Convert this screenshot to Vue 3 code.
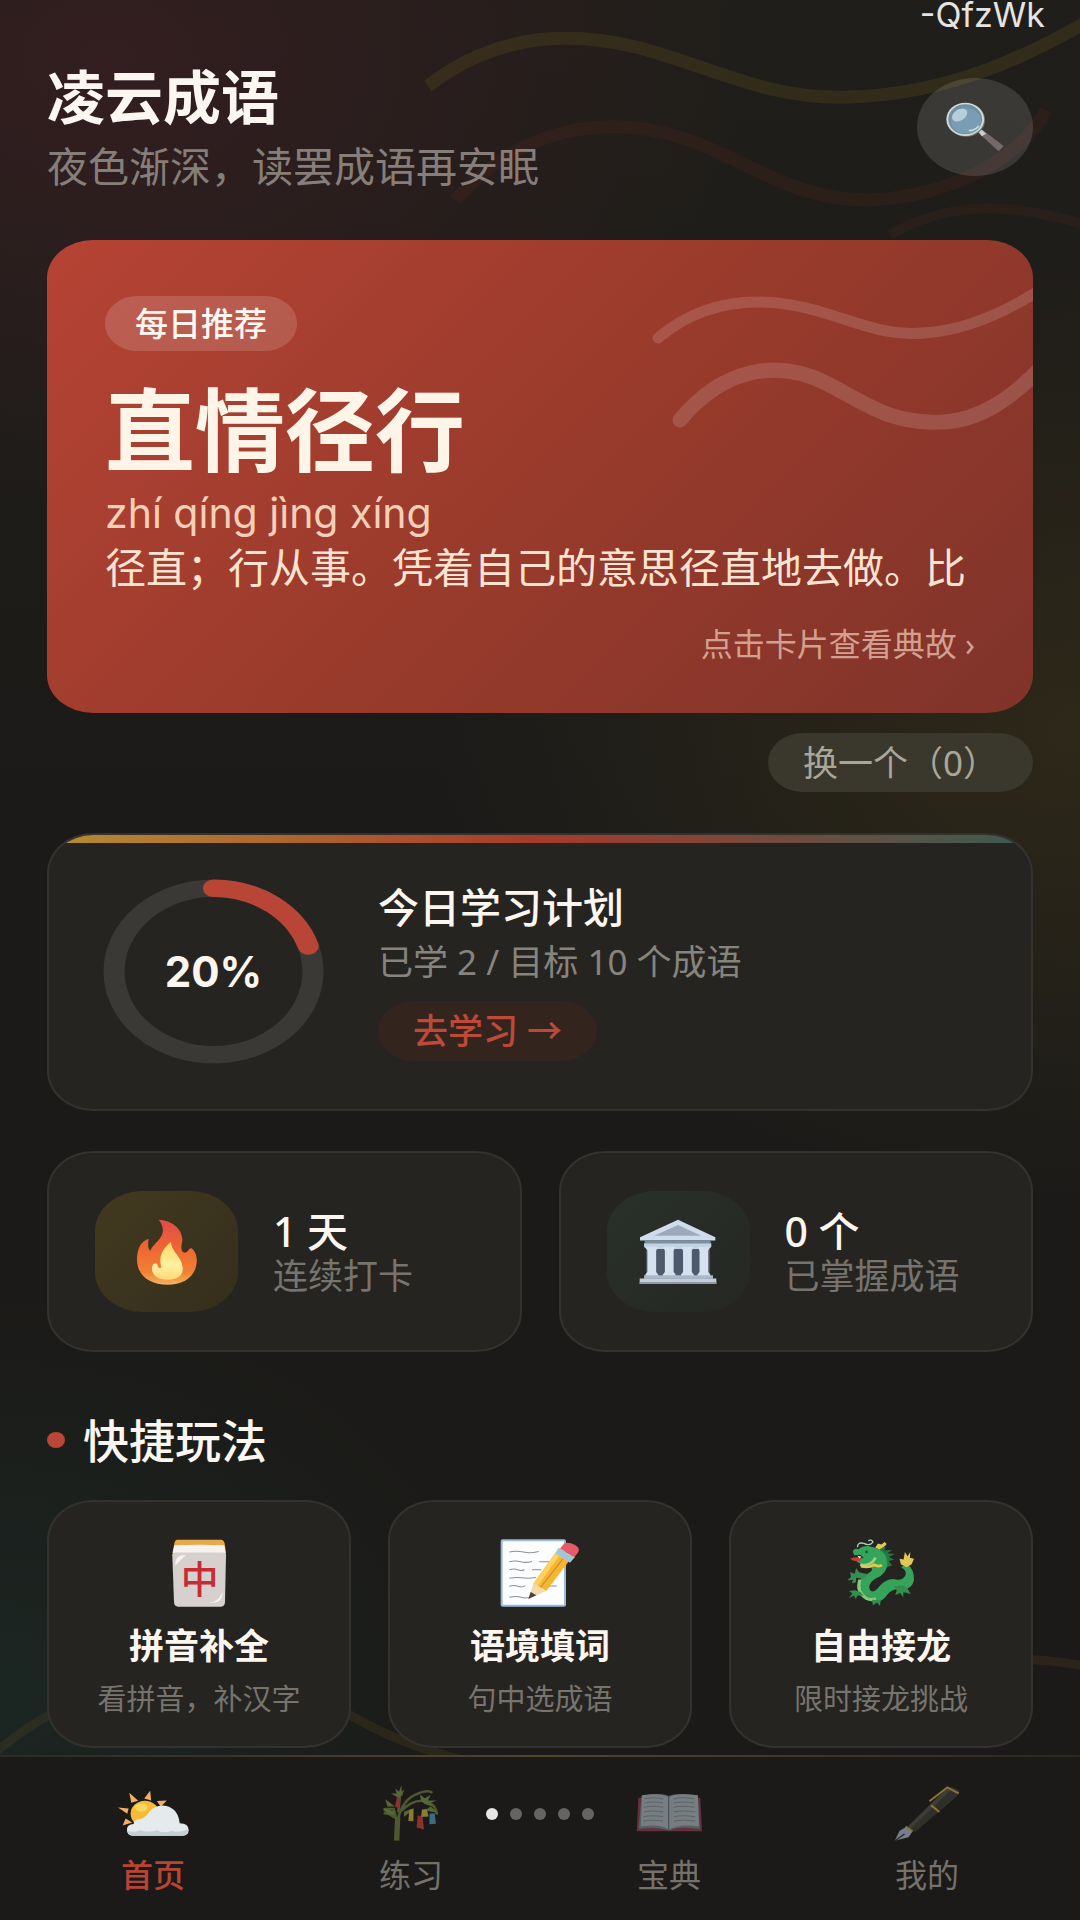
<script setup>
const games = [
  { icon: 'tile', name: '拼音补全', note: '看拼音，补汉字' },
  { icon: 'memo', name: '语境填词', note: '句中选成语' },
  { icon: 'dragon', name: '自由接龙', note: '限时接龙挑战' },
]
const tabs = [
  { icon: 'weather', name: '首页', active: true },
  { icon: 'bamboo', name: '练习' },
  { icon: 'book', name: '宝典' },
  { icon: 'pen', name: '我的' },
]
const progress = 20
</script>

<template>
  <div class="page">
    <svg class="waves waves-top" viewBox="0 0 1080 300" preserveAspectRatio="none" aria-hidden="true">
      <path d="M428 86C490 38 560 28 640 48C720 70 770 100 850 97C950 94 1030 55 1090 20" stroke="#6d5a1e" stroke-opacity=".24" stroke-width="13" />
      <path d="M455 200C510 140 580 115 660 132C740 150 780 200 870 200C950 196 1020 160 1046 110" stroke="#7a2e22" stroke-opacity=".15" stroke-width="13" />
      <path d="M890 235C950 200 1010 202 1090 226" stroke="#7a2e22" stroke-opacity=".12" stroke-width="10" />
    </svg>
    <svg class="waves waves-bottom" viewBox="0 0 1080 200" preserveAspectRatio="none" aria-hidden="true">
      <path d="M-10 197C100 100 250 90 350 155C390 178 420 190 480 204M880 150C930 100 1000 90 1090 107" stroke="#6d5a1e" stroke-opacity=".18" stroke-width="9" />
    </svg>

    <div class="status">-QfzWk</div>

    <main class="content">
      <header class="header">
        <div>
          <h1>凌云成语</h1>
          <p class="greeting">夜色渐深，读罢成语再安眠</p>
        </div>
        <button class="search" type="button" aria-label="搜索">
          <svg width="58" height="50" viewBox="135 100 175 150" preserveAspectRatio="none">
            <path d="M230 190L246 184L309 232L294 248Z" fill="#746a6b" />
            <path d="M232 188L243 183L256 195L243 203Z" fill="#c9ced0" />
            <ellipse cx="196" cy="154" rx="57" ry="50" fill="#77716d" />
            <ellipse cx="193" cy="152" rx="57" ry="50" fill="#d4d8d8" />
            <ellipse cx="193" cy="152" rx="51" ry="45" fill="#6e8fa4" />
            <ellipse cx="196" cy="157" rx="45" ry="38" fill="#7b9db3" />
            <ellipse cx="176" cy="139" rx="25" ry="17" transform="rotate(-32 176 139)" fill="#b4cfdb" />
            <path d="M204 186Q222 186 234 172" stroke="#c5dce4" stroke-width="5" fill="none" />
          </svg>
        </button>
      </header>

      <article class="daily">
        <svg class="daily-waves" viewBox="0 0 400 160" preserveAspectRatio="none" aria-hidden="true">
          <path d="M25 52C70 14 125 8 185 25C235 40 255 50 290 47C330 45 370 28 410 2" stroke-width="11" />
          <path d="M47 134C90 82 145 72 195 98C240 122 260 138 310 136C350 134 380 110 410 80" stroke-width="15" />
        </svg>
        <span class="tag">每日推荐</span>
        <h2>直情径行</h2>
        <p class="pinyin">zhí qíng jìng xíng</p>
        <p class="meaning">径直；行从事。凭着自己的意思径直地去做。比</p>
        <p class="hint">点击卡片查看典故 ›</p>
      </article>

      <button class="swap" type="button">换一个（0）</button>

      <section class="plan">
        <div class="ring">
          <svg viewBox="0 0 220 220" preserveAspectRatio="none" aria-hidden="true">
            <circle cx="110" cy="110" r="99" fill="none" stroke="#3a3935" stroke-width="21" />
            <circle cx="110" cy="110" r="99" fill="none" stroke="#b94536" stroke-width="21" stroke-linecap="round"
              pathLength="100" :stroke-dasharray="`${progress} 100`" transform="rotate(-90 110 110)" />
          </svg>
          <strong>{{ progress }}%</strong>
        </div>
        <div>
          <h3>今日学习计划</h3>
          <p class="plan-note">已学 2 / 目标 10 个成语</p>
          <button class="learn" type="button">去学习 →</button>
        </div>
      </section>

      <section class="stats">
        <div class="stat">
          <span class="badge gold">
            <svg width="62" height="66" viewBox="135 120 187 200" preserveAspectRatio="none" aria-hidden="true">
              <defs>
                <linearGradient id="flame" x1="0" y1="0" x2="0" y2="1">
                  <stop offset="0" stop-color="#df4b4b" /><stop offset=".4" stop-color="#ee6433" /><stop offset=".8" stop-color="#f28034" /><stop offset="1" stop-color="#f4b25c" />
                </linearGradient>
                <linearGradient id="core" x1="0" y1="0" x2="0" y2="1">
                  <stop offset="0" stop-color="#fdd663" /><stop offset=".6" stop-color="#fff0a0" /><stop offset="1" stop-color="#ffd87a" />
                </linearGradient>
              </defs>
              <path fill="url(#flame)" d="M203 122C244 124 276 150 275 186C270 205 270 222 283 222C294 221 293 208 302 209C315 218 320 236 318 252C314 295 280 319 230 319C175 319 138 290 138 243C138 210 150 188 173 180C170 200 172 212 178 216C190 190 218 180 216 152C215 138 210 130 203 122Z" />
              <path fill="url(#core)" d="M240 190C243 222 275 235 276 270C276 293 260 303 230 304C200 304 183 290 183 270C183 258 190 252 199 256C200 266 205 271 212 267C203 240 210 215 240 190Z" />
            </svg>
          </span>
          <div><p class="count">1 天</p><p class="label">连续打卡</p></div>
        </div>
        <div class="stat">
          <span class="badge jade">
            <svg width="78" height="66" viewBox="115 120 232 202" preserveAspectRatio="none" aria-hidden="true">
              <path fill="#4c5a6b" d="M136 205H326V296H136Z" />
              <path fill="#cfdceb" d="M231 122L342 176V186H118V176Z" />
              <path fill="#9caabc" d="M231 138L300 171H160Z" />
              <path fill="#7f8fa3" d="M132 186H328V194H132Z" />
              <path fill="#c4d3e4" d="M130 194H330V206L322 212H138L130 206Z" />
              <path v-for="x in [135, 187, 241, 290]" :key="x" fill="#d5e1ee" :d="`M${x} 206h36l-5 11v65l6 8v6h-38v-6l6-8v-65z`" />
              <path fill="#a9b8ca" d="M130 292H335V303H130Z" />
              <path fill="#c3ceda" d="M117 302H345V318H117Z" />
              <path fill="#8b9bae" d="M117 313H345V319H117Z" />
            </svg>
          </span>
          <div><p class="count">0 个</p><p class="label">已掌握成语</p></div>
        </div>
      </section>

      <h2 class="section-title">快捷玩法</h2>
      <section class="games">
        <button v-for="game in games" :key="game.name" class="game" type="button">
          <svg v-if="game.icon === 'tile'" width="54" height="68" viewBox="68 58 160 203" preserveAspectRatio="none" aria-hidden="true">
            <path fill="#e9a849" d="M84 60H214Q224 61 225 78L228 100H69L74 76Q76 60 84 60Z" />
            <path fill="#f5f2ef" d="M75 77Q150 73 223 77L228 108H69Z" />
            <path fill="#d6d1ce" d="M69 108Q69 98 80 98H217Q228 98 228 108L225 247Q224 260 213 260H86Q75 260 74 247Z" />
            <path fill="#f6f4f2" d="M78 137Q76 104 109 106Q96 119 78 137ZM176 249Q207 246 217 217Q220 251 176 249Z" />
            <text x="150" y="219" text-anchor="middle" font-size="112" font-weight="500" fill="#c92b34">中</text>
          </svg>
          <svg v-else-if="game.icon === 'memo'" width="80" height="68" viewBox="1048 58 240 203" preserveAspectRatio="none" aria-hidden="true">
            <rect x="1053" y="62" width="190" height="195" rx="3" fill="#fbfdff" stroke="#9bb9d9" stroke-width="6" />
            <g fill="none" stroke="#8d9298" stroke-width="3">
              <path d="M1076 97q22-5 42 0t46-2M1076 126q18-4 34 0t34-1M1166 126h34M1076 150q14-5 25 0t20-1M1144 150h28M1076 175q20-4 38-1t42-1M1076 199q14-5 26 0t22-2M1190 198h28M1076 232q20-5 36 0t30-2" />
            </g>
            <path fill="#f3b532" d="M1148 191L1213 101L1255 124L1187 213Z" />
            <path fill="#ffd161" d="M1148 191L1213 101L1226 108L1160 200Z" />
            <path stroke="#cf872a" stroke-width="3" d="M1170 202L1238 116" />
            <path fill="#f2dcae" d="M1148 191L1187 213L1133 237Z" />
            <path fill="#48443f" d="M1140 216L1157 226L1133 237Z" />
            <path fill="#a5c6cf" d="M1213 101L1224 84L1273 112L1258 129Z" />
            <path fill="#e65a68" d="M1228 86L1240 72Q1252 65 1273 76Q1290 86 1282 98L1272 112Z" />
          </svg>
          <svg v-else width="68" height="68" viewBox="80 60 202 200" preserveAspectRatio="none" aria-hidden="true">
            <g fill="#247a43">
              <path d="M168 92L196 82L190 94L214 92L200 102L221 104L204 113L220 121L203 125L214 137L190 146Z" />
            </g>
            <path fill="#36a35b" d="M97 98Q100 85 115 90Q124 80 146 81Q186 87 197 115Q207 148 180 169Q145 184 146 204Q153 224 170 206Q192 178 218 178Q246 185 254 166Q258 152 241 143L257 132Q281 150 279 181Q274 208 242 209Q214 204 199 225Q181 251 154 244Q115 236 110 202Q111 179 140 163Q164 150 149 137Q128 139 108 127L129 114L119 106L102 108Z" />
            <path fill="none" stroke="#8bc879" stroke-width="9" d="M118 180Q107 215 138 235Q148 240 166 236" />
            <path fill="none" stroke="#98d384" stroke-width="8" d="M119 135Q150 143 165 115" />
            <path fill="none" stroke="#e8c64a" stroke-width="8" d="M121 140Q146 145 160 136Q174 143 184 137" />
            <path fill="#c43e34" d="M89 118Q104 112 126 115L119 125Q101 128 89 118Z" />
            <path fill="#fff" d="M111 109L123 112L117 117Z" />
            <path fill="none" stroke="#a8d3b4" stroke-width="4" d="M111 84Q111 68 130 73Q147 82 157 69Q153 60 143 65" />
            <path fill="#e3c653" d="M164 85L172 73L182 76L192 69L198 75L190 83L176 91ZM240 134L236 118L248 120L252 98L260 111L268 98L267 115L279 118L272 134L257 143Z" />
            <path fill="#348e50" d="M130 178L107 174L107 187L94 190L98 180L81 182L92 172L89 157L103 162L107 145L116 158L142 164ZM119 215L103 211L86 213L96 220L86 234L101 226L106 237L111 226L130 227ZM154 239L157 255L169 247L178 257L180 240ZM218 199L228 211L223 225L238 219L247 231L248 216L269 222L259 204L245 196Z" />
            <circle cx="138" cy="98" r="4" fill="#17532c" />
          </svg>
          <span class="game-name">{{ game.name }}</span>
          <span class="game-note">{{ game.note }}</span>
        </button>
      </section>
    </main>

    <nav class="tabs">
      <a v-for="tab in tabs" :key="tab.name" href="#" :class="{ active: tab.active }">
        <span class="tab-icon">
          <svg v-if="tab.icon === 'weather'" width="72" height="46" viewBox="48 66 217 137" preserveAspectRatio="none" aria-hidden="true">
            <path fill="#f0ae67" d="M85 74L112 98L91 104ZM148 68L151 97L130 91ZM198 97L180 116L168 99ZM51 118L83 121L79 137ZM65 172L74 151L94 163Z" />
            <ellipse cx="132" cy="137" rx="43" ry="39" fill="#f5bc35" />
            <ellipse cx="121" cy="118" rx="19" ry="12" fill="#ffd65d" />
            <path fill="#e5ebed" d="M94 202Q77 200 78 182Q79 168 98 167Q98 154 118 152Q136 148 146 130Q160 112 186 112Q232 116 237 165Q264 165 264 186Q263 202 246 202Z" />
            <path fill="#c4cfd4" d="M80 188Q103 194 119 185Q141 194 169 186Q187 197 213 187Q235 195 263 184Q263 202 246 202H94Q82 200 80 188Z" />
          </svg>
          <svg v-else-if="tab.icon === 'bamboo'" width="56" height="56" viewBox="848 52 168 170" preserveAspectRatio="none" aria-hidden="true">
            <g fill="none" stroke="#4d5830" stroke-width="8">
              <path stroke-width="16" d="M889 221L892 150" />
              <path d="M892 160Q905 100 944 82T996 76M903 130Q940 94 973 101T1010 142M888 153L866 140L850 137M887 151L880 125L855 125M894 135L899 80" />
            </g>
            <path fill="#57653a" d="M894 91L872 78L889 78L884 63L896 72L903 52L904 72L912 65L906 83ZM962 99L959 80L973 92L991 82L983 99L1010 99L989 107L998 118L973 110ZM864 139L849 129L850 121L883 133L881 144ZM911 149L911 133L942 121L925 138ZM974 129L991 117L1012 136L994 133ZM861 117L855 95L884 117Z" />
            <path fill="#8c3030" d="M890 88L900 97L895 124L884 117ZM952 144L967 150L971 187L949 181Z" />
            <path fill="#877b35" d="M927 127L940 125L939 162L924 161ZM965 126L979 125L985 148L962 149Z" />
            <path fill="#3c6c80" d="M988 139L1003 138L1007 170L987 171Z" />
          </svg>
          <svg v-else-if="tab.icon === 'book'" width="66" height="40" viewBox="510 80 192 120" preserveAspectRatio="none" aria-hidden="true">
            <path fill="#63323a" d="M517 94H697L702 195H512Z" />
            <path fill="#566166" d="M518 187L526 88Q585 77 605 89Q628 77 690 88L696 188Q633 179 612 191H600Q570 181 518 187Z" />
            <path fill="#777e81" d="M524 180L528 87Q584 79 605 93Q629 79 690 87L693 180Q633 172 606 190Q579 172 524 180Z" />
            <path stroke="#5c6468" stroke-width="3" fill="none" d="M535 98q27-7 54 0M535 110q27-6 54 0M533 123q27-6 56 0M533 137q27-6 56 0M532 151q27-6 57 0M531 165q27-6 58 0M619 98q27-7 60 0M619 110q27-6 61 0M619 123q27-6 61 0M620 137q27-6 62 0M620 151q27-6 62 0M620 165q27-6 63 0" />
            <path d="M605 89V194" stroke="#4c575d" stroke-width="4" />
          </svg>
          <svg v-else width="66" height="56" viewBox="1262 55 188 168" preserveAspectRatio="none" aria-hidden="true">
            <path fill="#30302b" d="M1301 180L1413 64Q1426 56 1447 72Q1451 80 1440 90L1321 197Z" />
            <path fill="#3c3d37" d="M1301 180L1413 64L1424 70L1310 186Z" />
            <path fill="none" stroke="#897337" stroke-width="6" d="M1363 104L1414 62L1446 80M1368 116L1391 136M1295 180L1315 194" />
            <path fill="#777e87" d="M1295 182L1314 196L1303 212L1264 222L1278 192Z" />
            <path d="M1265 222L1292 202" stroke="#272b30" stroke-width="4" />
          </svg>
        </span>
        <span>{{ tab.name }}</span>
      </a>
      <div class="dots" aria-hidden="true"><i v-for="n in 5" :key="n" :class="{ on: n === 1 }"></i></div>
    </nav>
  </div>
</template>

<style>
body { margin: 0; background: #1b1a18; }
</style>

<style scoped>
.page {
  position: relative;
  display: flex;
  flex-direction: column;
  min-height: 100vh;
  overflow: hidden;
  box-sizing: border-box;
  color: #fbf6ef;
  font-family: "Noto Sans", "Noto Sans CJK SC", sans-serif;
  background:
    radial-gradient(ellipse 640px 460px at 10% 3%, #331e20 0%, #331e2000 100%),
    radial-gradient(ellipse 640px 480px at 100% 38%, #2d2818 0%, #2d281800 100%),
    radial-gradient(ellipse 500px 400px at 0% 88%, #1b2622 0%, #1b262200 100%),
    linear-gradient(#201e1a, #1b1a18 45%, #1b1a18);
}
h1, h2, h3, p { margin: 0; }
button { border: 0; padding: 0; font-family: inherit; color: inherit; cursor: pointer; }
svg { display: block; }
.waves { position: absolute; left: 0; width: 100%; fill: none; }
.waves-top { top: 0; height: 300px; }
.waves-bottom { bottom: 160px; height: 200px; }
.status {
  position: relative;
  padding-right: 35px;
  text-align: right;
  font-family: Inter, sans-serif;
  font-size: 34px;
  line-height: 30px;
  color: #e6e4e1;
}
.content { position: relative; padding: 34px 47px 7px; }
.header { display: flex; align-items: center; justify-content: space-between; }
h1 { font-size: 58px; line-height: 66px; font-weight: 700; }
.greeting { margin-top: 12px; font-size: 41px; line-height: 48px; color: #867e78; }
.search {
  display: flex;
  align-items: center;
  justify-content: center;
  width: 116px;
  height: 98px;
  border-radius: 50%;
  background: #ffffff1f;
}
.daily {
  position: relative;
  overflow: hidden;
  margin-top: 50px;
  padding: 56px 58px 49px;
  border-radius: 46px / 38px;
  background: linear-gradient(135deg, #b64334 0%, #9a3b2c 48%, #80332a 100%);
}
.daily-waves {
  position: absolute;
  top: 46px;
  right: 0;
  width: 400px;
  height: 160px;
  fill: none;
  stroke: #ffffff24;
  stroke-linecap: round;
}
.tag {
  display: inline-block;
  padding: 0 30px;
  border-radius: 32px / 27px;
  font-size: 33px;
  line-height: 55px;
  font-weight: 500;
  background: #ffffff26;
  vertical-align: top;
}
.daily h2 { margin-top: 28px; font-size: 90px; line-height: 100px; font-weight: 700; color: #fff4e8; }
.pinyin { margin-top: 10px; font-family: Inter, sans-serif; font-size: 41px; line-height: 48px; color: #f3cfb9; }
.meaning { margin-top: 6px; font-size: 41px; line-height: 48px; color: #fbe3d2; white-space: nowrap; }
.hint { margin-top: 33px; font-size: 32px; line-height: 40px; text-align: right; color: #d3a08f; }
.swap {
  display: block;
  margin: 20px 0 0 auto;
  padding: 0 35px;
  border-radius: 35px / 29px;
  font-size: 35px;
  line-height: 59px;
  color: #a9a69a;
  background: #3a372c;
}
.plan, .stat, .game {
  box-sizing: border-box;
  border: 2px solid #33322e;
  border-radius: 46px / 40px;
  background: #262420;
}
.plan {
  position: relative;
  overflow: hidden;
  display: flex;
  align-items: center;
  gap: 54px;
  margin-top: 41px;
  padding: 44px 54px 45px;
}
.plan::before {
  content: "";
  position: absolute;
  inset: 0 0 auto;
  height: 8px;
  background: linear-gradient(90deg, #b58d32, #a83a2b 50%, #3a5c50);
}
.ring { display: grid; place-items: center; }
.ring > * { grid-area: 1 / 1; }
.ring svg { width: 221px; height: 185px; }
.ring strong { font-family: Inter, sans-serif; font-size: 42px; line-height: 48px; font-weight: 700; }
h3 { font-size: 41px; line-height: 50px; font-weight: 500; }
.plan-note { margin-top: 9px; font-size: 35px; line-height: 42px; color: #87847e; }
.learn {
  margin-top: 18px;
  padding: 0 35px;
  border-radius: 36px / 30px;
  font-size: 35px;
  line-height: 60px;
  font-weight: 500;
  color: #bd4939;
  background: #34241e;
}
.stats { display: grid; grid-template-columns: 1fr 1fr; gap: 37px; margin-top: 40px; }
.stat { display: flex; align-items: center; gap: 35px; padding: 38px 46px; }
.badge {
  flex: none;
  display: flex;
  align-items: center;
  justify-content: center;
  width: 143px;
  height: 121px;
  border-radius: 48px / 40px;
}
.gold { background: linear-gradient(135deg, #42391f, #342e1c); }
.jade { background: linear-gradient(135deg, #29302a, #262822); }
.count { font-size: 41px; line-height: 46px; font-weight: 500; }
.label { margin-top: 2px; font-size: 35px; line-height: 40px; color: #77746e; white-space: nowrap; }
.section-title {
  display: flex;
  align-items: center;
  gap: 18px;
  margin-top: 60px;
  font-size: 46px;
  line-height: 56px;
  font-weight: 500;
}
.section-title::before { content: ""; width: 18px; height: 16px; border-radius: 50%; background: #b94738; }
.games { display: grid; grid-template-columns: repeat(3, 1fr); gap: 37px; margin-top: 32px; }
.game { display: flex; flex-direction: column; align-items: center; padding: 37px 0 29px; }
.game-name { margin-top: 17px; font-size: 35px; line-height: 44px; font-weight: 700; }
.game-note { margin-top: 13px; font-size: 29px; line-height: 36px; color: #77746e; }
.tabs {
  position: relative;
  display: grid;
  grid-template-columns: repeat(4, 1fr);
  margin-top: auto;
  padding: 26px 24px 25px;
  border-top: 2px solid;
  border-image: linear-gradient(90deg, #2c2b25, #54452a 50%, #2c2820) 1;
  background: #1b1a18;
}
.tabs a {
  display: flex;
  flex-direction: column;
  align-items: center;
  gap: 12px;
  font-size: 32px;
  line-height: 40px;
  color: #75716b;
  text-decoration: none;
}
.tabs a.active { color: #b64536; font-weight: 500; }
.tab-icon { display: flex; align-items: center; height: 60px; }
.dots { position: absolute; top: 51px; left: 0; right: 0; display: flex; justify-content: center; gap: 12px; pointer-events: none; }
.dots i { width: 12px; height: 12px; border-radius: 50%; background: #656462; }
.dots i.on { background: #e6e6e5; }
</style>
